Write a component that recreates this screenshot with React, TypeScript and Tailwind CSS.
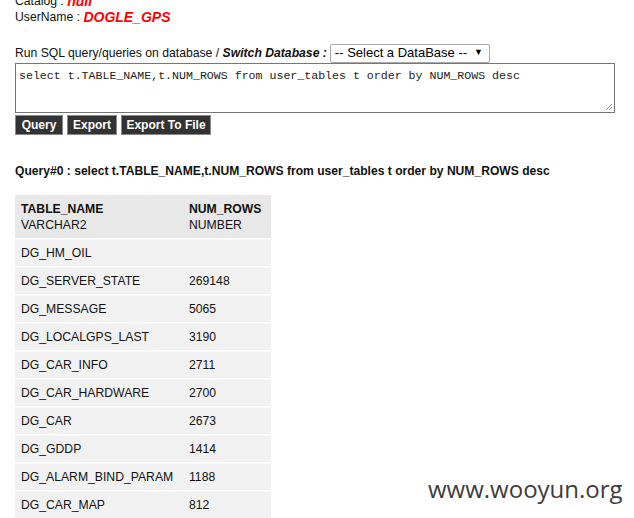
import React from "react";

const rows: [string, string][] = [
  ["DG_HM_OIL", ""],
  ["DG_SERVER_STATE", "269148"],
  ["DG_MESSAGE", "5065"],
  ["DG_LOCALGPS_LAST", "3190"],
  ["DG_CAR_INFO", "2711"],
  ["DG_CAR_HARDWARE", "2700"],
  ["DG_CAR", "2673"],
  ["DG_GDDP", "1414"],
  ["DG_ALARM_BIND_PARAM", "1188"],
  ["DG_CAR_MAP", "812"],
  ["DG_X", "700"],
];

export default function App() {
  return (
    <div
      className="relative w-[634px] h-[518px] overflow-hidden bg-white text-[12.2px] text-[#111]"
      style={{ fontFamily: '"Liberation Sans", Arial, sans-serif' }}
    >
      <div className="pl-[15px] -mt-[7px]">
        <div className="h-[16px] leading-[16px] flex items-end">
          <span>Catalog :&nbsp;</span>
          <span className="text-[#ff0000] font-bold italic text-[14px]">null</span>
        </div>
        <div className="h-[17px] leading-[17px] flex items-end">
          <span>UserName :&nbsp;</span>
          <span className="text-[#ff0000] font-bold italic text-[14px]">DOGLE_GPS</span>
        </div>
        <div className="h-[17px]" />
        <div className="flex items-center h-[20px]">
          <span>Run SQL query/queries on database /&nbsp;</span>
          <span className="font-bold italic">Switch Database :</span>
          <div className="ml-[3px] w-[160px] h-[19px] border border-[#a9a9a9] rounded-[2px] flex items-center justify-between pl-[4px] pr-[6px] text-[13px] text-black bg-white">
            <span>-- Select a DataBase --</span>
            <span className="text-[9px]">▼</span>
          </div>
        </div>
        <div
          className="relative w-[600px] h-[50px] border border-[#767676] pl-[3px] pt-[3px] text-[11.6px] text-[#222]"
          style={{ fontFamily: '"Liberation Mono", "Courier New", monospace' }}
        >
          select t.TABLE_NAME,t.NUM_ROWS from user_tables t order by NUM_ROWS desc
          <svg className="absolute right-[1px] bottom-[1px]" width="8" height="8" viewBox="0 0 8 8">
            <line x1="7" y1="1" x2="1" y2="7" stroke="#999" strokeWidth="1" />
            <line x1="7" y1="4" x2="4" y2="7" stroke="#999" strokeWidth="1" />
          </svg>
        </div>
        <div className="flex gap-[4px] mt-[2px]">
          <div className="h-[20px] bg-[#333] border border-[#8a8a8a] text-white font-bold text-[12px] flex items-center w-[48px] justify-center">
            Query
          </div>
          <div className="h-[20px] bg-[#333] border border-[#8a8a8a] text-white font-bold text-[12px] flex items-center w-[50px] justify-center">
            Export
          </div>
          <div className="h-[20px] bg-[#333] border border-[#8a8a8a] text-white font-bold text-[12px] flex items-center w-[90px] justify-center">
            Export To File
          </div>
        </div>
        <div className="mt-[28px] font-bold h-[16px] leading-[16px] text-[12.1px]">
          Query#0 : select t.TABLE_NAME,t.NUM_ROWS from user_tables t order by NUM_ROWS desc
        </div>
        <div className="mt-[16px] w-[256px] flex flex-col gap-[1px] bg-white">
          <div className="grid grid-cols-[174px_82px] bg-[#e8e8e8] h-[43px] items-center">
            <div className="pl-[6px] leading-[16px]">
              <div className="font-bold">TABLE_NAME</div>
              <div>VARCHAR2</div>
            </div>
            <div className="leading-[16px]">
              <div className="font-bold">NUM_ROWS</div>
              <div>NUMBER</div>
            </div>
          </div>
          {rows.map(([name, n], i) => (
            <div
              key={i}
              className="grid grid-cols-[174px_82px] bg-[#f1f1f1] h-[27px] items-center border-t border-[#fafafa]"
            >
              <div className="pl-[6px]">{name}</div>
              <div>{n}</div>
            </div>
          ))}
        </div>
      </div>
      <div
        className="absolute left-[428px] top-[471px] text-[24px] text-[#3d3d3d]"
        style={{ fontFamily: '"Open Sans", "Noto Sans", sans-serif' }}
      >
        www.wooyun.org
      </div>
    </div>
  );
}
